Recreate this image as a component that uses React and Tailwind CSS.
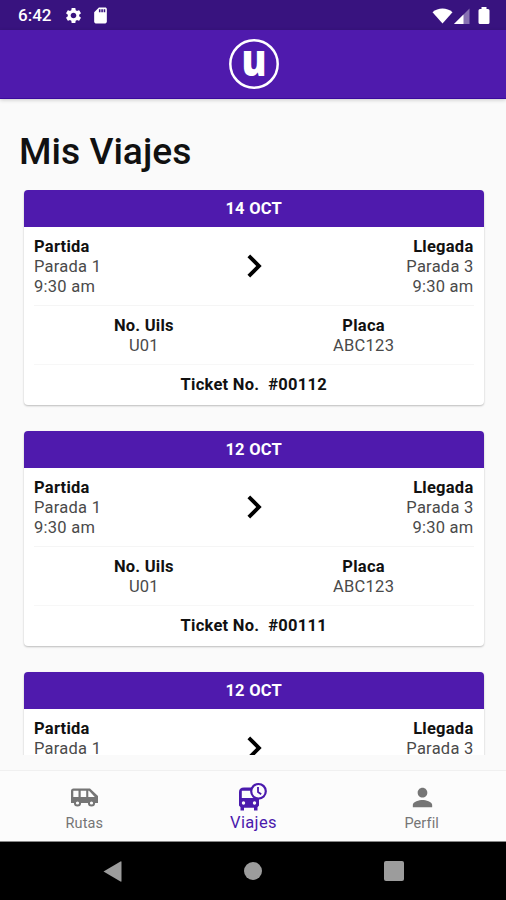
import React from "react";
import { MdChevronRight, MdPerson, MdSdCard, MdSettings } from "react-icons/md";

const trips = [
  { id: 1, date: "14 OCT", ticket: "#00112" },
  { id: 2, date: "12 OCT", ticket: "#00111" },
  { id: 3, date: "12 OCT", ticket: "#00110" },
];

const ShuttleIcon = () => (
  <svg className="h-[29px] w-[29px]" viewBox="0 0 29 29">
    <path
      d="M3.500 5.500H20L28 13V20H1V8Q1 5.500 3.500 5.500ZM3.300 7.700V14H8.500V7.700ZM10.700 7.700V14H16.200V7.700ZM18.300 7.700V14H24.800L19 7.700Z"
      fill="currentColor"
      fillRule="evenodd"
    />
    <circle cx="7.500" cy="20" r="2.600" fill="#fcfcfc" stroke="currentColor" strokeWidth="2" />
    <circle cx="21.500" cy="20" r="2.600" fill="#fcfcfc" stroke="currentColor" strokeWidth="2" />
  </svg>
);

const BusClockIcon = () => (
  <svg className="h-[30px] w-[30px]" viewBox="0 0 30 30">
    <path
      d="M6 5.500H18L21 16V23.500L19.500 25.300V28.500H16V25.800H6V28.500H2.500V25.300L1 23.500V10Q1 5.500 6 5.500ZM3.800 8.800V16H18.500V8.800Z"
      fill="currentColor"
      fillRule="evenodd"
    />
    <circle cx="5.500" cy="21" r="1.700" fill="#fcfcfc" />
    <circle cx="16.500" cy="21" r="1.700" fill="#fcfcfc" />
    <circle cx="20.500" cy="9.300" r="7.300" fill="#fcfcfc" stroke="currentColor" strokeWidth="2.200" />
    <path d="M20 5V10L23.200 12.300" fill="none" stroke="currentColor" strokeWidth="1.800" />
  </svg>
);

const StatusBar = () => (
  <div className="flex h-[30px] shrink-0 items-center bg-[#38137f] pl-[18px] pr-[16px] pt-[1px] text-white">
    <span className="w-[46px] text-[17px] font-medium">6:42</span>
    <MdSettings className="size-[19px]" />
    <MdSdCard className="ml-[8px] size-[19px]" />
    <svg className="ml-auto h-4 w-[21px]" viewBox="0 0 21 16" fill="currentColor">
      <path d="M10.5 15.5 0.5 4.2C6 -0.6 15 -0.6 20.5 4.2Z" />
    </svg>
    <svg className="ml-px h-4 w-4" viewBox="0 0 16 16" fill="currentColor">
      <path d="M0 16 15.5 0.5V16Z" opacity="0.4" />
      <path d="M0 16 9.5 6.5V16Z" />
    </svg>
    <svg className="ml-2 h-[17px] w-3" viewBox="0 0 12 17" fill="currentColor">
      <path d="M3.5 0h5v2h1.500Q11.500 2 11.500 3.500V15.500Q11.500 17 10 17h-8Q0.500 17 0.500 15.500V3.500Q0.500 2 2 2h1.500Z" />
    </svg>
  </div>
);

const Header = () => (
  <header className="z-10 flex h-[69px] shrink-0 items-center justify-center border-b border-[#3a0a9c] bg-[#4f1aad] shadow-[0_1px_4px_rgba(0,0,0,0.2)]">
    <svg className="ml-px h-[52px] w-[52px]" viewBox="0 0 52 52">
      <circle cx="26" cy="26" r="23.700" fill="none" stroke="white" strokeWidth="2.500" />
      <text
        x="0"
        y="0"
        transform="translate(26 37.500) scale(0.85 1)"
        textAnchor="middle"
        fill="white"
        className="font-['Open_Sans',sans-serif] text-[44px] font-extrabold"
      >
        u
      </text>
    </svg>
  </header>
);

const TripCard = ({ date, ticket }) => (
  <article className="mb-[26.4px] shrink-0 rounded bg-white text-[16.500px] leading-[19.67px] tracking-[0.25px] text-[#4a4a4a] shadow-[0_1px_2px_rgba(0,0,0,0.25)]">
    <h2 className="flex h-[37px] items-center justify-center rounded-t bg-[#4f1aad] pt-[1px] font-bold text-white">
      {date}
    </h2>
    <div className="px-[10px]">
      <div className="flex h-[79px] items-center justify-between border-b border-[#f5f5f5]">
        <div className="w-[120px] pt-[2px]">
          <p className="font-bold text-[#111]">Partida</p>
          <p>Parada 1</p>
          <p>9:30 am</p>
        </div>
        <MdChevronRight className="size-[46px] text-black" />
        <div className="w-[120px] pt-[2px] text-right">
          <p className="font-bold text-[#111]">Llegada</p>
          <p>Parada 3</p>
          <p>9:30 am</p>
        </div>
      </div>
      <div className="grid h-[59.3px] grid-cols-2 items-center border-b border-[#f7f7f7] pt-[2px] text-center">
        <div>
          <p className="font-bold text-[#111]">No. Uils</p>
          <p>U01</p>
        </div>
        <div>
          <p className="font-bold text-[#111]">Placa</p>
          <p>ABC123</p>
        </div>
      </div>
      <p className="flex h-[39.3px] items-center justify-center gap-[9px] font-bold text-[#111]">
        <span>Ticket No.</span>
        <span>{ticket}</span>
      </p>
    </div>
  </article>
);

const BottomNav = () => (
  <nav className="grid h-[72px] shrink-0 grid-cols-3 border-b border-t border-t-[#f0f0f0] border-b-[#888] bg-[#fcfcfc] text-[#757575]">
    <div className="flex flex-col items-center pt-[12px]">
      <ShuttleIcon />
      <span className="text-[14.5px] leading-[24px] tracking-[0.1px]">Rutas</span>
    </div>
    <div className="flex flex-col items-center pt-[11px] text-[#4a1aad]">
      <BusClockIcon />
      <span className="pl-px text-[16.5px] leading-[22px] tracking-[0.35px]">Viajes</span>
    </div>
    <div className="flex flex-col items-center pt-[12px]">
      <MdPerson className="ml-px size-[29px]" />
      <span className="text-[14.5px] leading-[24px] tracking-[0.1px]">Perfil</span>
    </div>
  </nav>
);

const SystemNav = () => (
  <div className="grid h-[58px] shrink-0 grid-cols-[112.500px_1fr_112.500px] items-center bg-black">
    <svg className="ml-auto -mr-[9px] h-[21px] w-[19px]" viewBox="0 0 19 21" fill="#9c9c9c">
      <path d="M0.500 10.500 17.500 0.500Q18.500 0 18.500 1V20Q18.500 21 17.500 20.500Z" />
    </svg>
    <div className="size-[18px] justify-self-center rounded-full bg-[#9c9c9c]" />
    <div className="-ml-[10px] size-[20px] rounded-[2px] bg-[#9c9c9c]" />
  </div>
);

const App = () => {
  return (
    <div className="flex h-[900px] w-[506px] flex-col overflow-hidden bg-[#fafafa] font-['Roboto',sans-serif]">
      <StatusBar />
      <Header />
      <main className="flex min-h-0 flex-1 flex-col pt-[31px]">
        <h1 className="mb-[17px] pl-[19px] text-[37.200px] font-medium leading-[43px] text-[#111]">Mis Viajes</h1>
        <div className="flex h-[565px] flex-col overflow-hidden pl-[24px] pr-[22.500px]">
          {trips.map((trip) => (
            <TripCard key={trip.id} date={trip.date} ticket={trip.ticket} />
          ))}
        </div>
      </main>
      <BottomNav />
      <SystemNav />
    </div>
  );
};

export default App;
